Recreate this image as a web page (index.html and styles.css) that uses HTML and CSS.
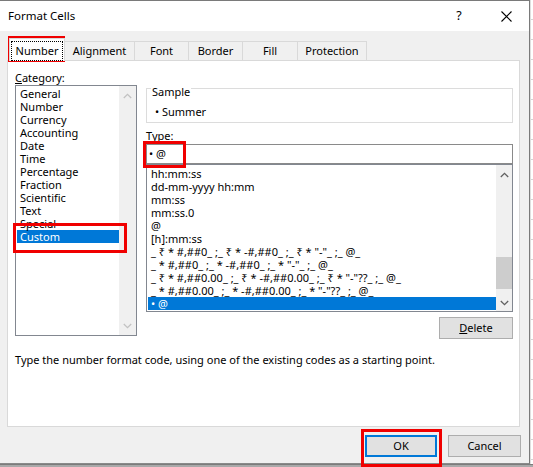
FILE: index.html
```html
<!DOCTYPE html>
<html>
<head>
<meta charset="utf-8">
<link rel="stylesheet" href="styles.css">
</head>
<body>
<div class="screen">
  <div class="desk">
    <div class="window">
      <div class="titlebar">
        <span class="title">Format Cells</span>
        <span class="help">?</span>
        <svg class="close" width="11" height="11" viewBox="0 0 11 11"><path d="M0.5 0.5 L10.5 10.5 M10.5 0.5 L0.5 10.5" stroke="#000" stroke-width="1.1" fill="none"/></svg>
      </div>
      <div class="tabs">
        <div class="tab active"><span class="focus">Number</span></div>
        <div class="tab t-align">Alignment</div>
        <div class="tab t-font">Font</div>
        <div class="tab t-border">Border</div>
        <div class="tab t-fill">Fill</div>
        <div class="tab t-prot">Protection</div>
      </div>
      <div class="panel">
        <div class="top">
          <div class="leftcol">
            <div class="label"><u>C</u>ategory:</div>
            <div class="catlist">
              <div class="items">
                <div class="item">General</div>
                <div class="item">Number</div>
                <div class="item">Currency</div>
                <div class="item">Accounting</div>
                <div class="item">Date</div>
                <div class="item">Time</div>
                <div class="item">Percentage</div>
                <div class="item">Fraction</div>
                <div class="item">Scientific</div>
                <div class="item">Text</div>
                <div class="item">Special</div>
                <div class="item selected">Custom</div>
              </div>
              <div class="vscroll disabled">
                <svg class="chev" width="9" height="6" viewBox="0 0 9 6"><polyline points="0.8,5 4.5,1.3 8.2,5" fill="none" stroke="currentColor" stroke-width="1.3"/></svg>
                <svg class="chev" width="9" height="6" viewBox="0 0 9 6"><polyline points="0.8,1 4.5,4.7 8.2,1" fill="none" stroke="currentColor" stroke-width="1.3"/></svg>
              </div>
            </div>
          </div>
          <div class="rightcol">
            <div class="group">
              <div class="legend">Sample</div>
              <div class="sample">&#8226; Summer</div>
            </div>
            <div class="typelabel">T<u>y</u>pe:</div>
            <div class="typeinput">&#8226; @</div>
            <div class="fmtlist">
              <div class="rows">
                <div class="row">hh:mm:ss</div>
                <div class="row">dd-mm-yyyy hh:mm</div>
                <div class="row">mm:ss</div>
                <div class="row">mm:ss.0</div>
                <div class="row">@</div>
                <div class="row">[h]:mm:ss</div>
                <div class="row">_ &#8377; * #,##0_ ;_ &#8377; * -#,##0_ ;_ &#8377; * "-"_ ;_ @_ </div>
                <div class="row">_ * #,##0_ ;_ * -#,##0_ ;_ * "-"_ ;_ @_ </div>
                <div class="row">_ &#8377; * #,##0.00_ ;_ &#8377; * -#,##0.00_ ;_ &#8377; * "-"??_ ;_ @_ </div>
                <div class="row">_ * #,##0.00_ ;_ * -#,##0.00_ ;_ * "-"??_ ;_ @_ </div>
                <div class="row selected">&#8226; @</div>
              </div>
              <div class="vscroll active">
                <svg class="chev" width="9" height="6" viewBox="0 0 9 6"><polyline points="0.8,5 4.5,1.3 8.2,5" fill="none" stroke="currentColor" stroke-width="1.3"/></svg>
                <div class="track"><div class="thumb"></div></div>
                <svg class="chev" width="9" height="6" viewBox="0 0 9 6"><polyline points="0.8,1 4.5,4.7 8.2,1" fill="none" stroke="currentColor" stroke-width="1.3"/></svg>
              </div>
            </div>
            <div class="delrow"><button class="btn del"><u>D</u>elete</button></div>
          </div>
        </div>
        <div class="hint">Type the number format code, using one of the existing codes as a starting point.</div>
      </div>
      <div class="footer">
        <button class="btn ok">OK</button>
        <button class="btn cancel">Cancel</button>
      </div>
    </div>
    <div class="strip"></div>
  </div>
  <div class="below"></div>
  <div class="mark m-tab"></div>
  <div class="mark m-custom"></div>
  <div class="mark m-type"></div>
  <div class="mark m-ok"></div>
</div>
</body>
</html>
```

FILE: styles.css
```css
* { box-sizing: border-box; }
html, body { margin: 0; padding: 0; }
body {
  width: 533px;
  height: 467px;
  overflow: hidden;
  background: #ffffff;
  font-family: "Noto Sans", "Open Sans", "DejaVu Sans", sans-serif;
  font-size: 11px;
  color: #000;
}
.screen { position: relative; width: 533px; height: 467px; }
.desk { display: flex; height: 464px; }
.window {
  width: 530px;
  height: 464px;
  background: #f0f0f0;
  border-top: 1px solid #7a7a7a;
  border-right: 1px solid #7a7a7a;
  border-bottom: 1px solid #8a8a8a;
  display: flex;
  flex-direction: column;
}
.strip {
  flex: 1;
  background: repeating-linear-gradient(to bottom, #ffffff 0, #ffffff 19px, #d4d4d4 19px, #d4d4d4 20px);
  border-left: 1px solid #e0e0e0;
}
.below { height: 3px; background: #a9a9a9; border-top: 1px solid #7c7c7c; }

.titlebar {
  height: 30px;
  background: #fff;
  display: flex;
  align-items: center;
  padding-left: 8px;
  flex: none;
}
.title { font-size: 11.5px; line-height: 14px; }
.help { margin-left: auto; font-size: 12.5px; line-height: 14px; width: 10px; text-align: center; margin-right: 37px; }
.close { margin-right: 17px; display: block; }

.tabs {
  display: flex;
  align-items: flex-end;
  height: 23px;
  margin-top: 7px;
  margin-bottom: -1px;
  padding-left: 9px;
  position: relative;
  z-index: 2;
  flex: none;
}
.tab {
  height: 19px;
  margin-bottom: 1px;
  border: 1px solid #d9d9d9;
  border-bottom: none;
  background: #f0f0f0;
  text-align: center;
  line-height: 17px;
  margin-left: -1px;
}
.tab.active {
  height: 23px;
  margin-bottom: 0;
  margin-left: 0;
  width: 56px;
  background: #fff;
  padding-top: 2px;
  position: relative;
  z-index: 3;
}
.tab .focus {
  display: block;
  margin: 0 1px;
  height: 20px;
  border: 1px dotted #000;
  line-height: 18px;
}
.t-align { width: 71px; }
.t-font { width: 55px; }
.t-border { width: 55px; }
.t-fill { width: 56px; }
.t-prot { width: 70px; }

.panel {
  margin-left: 7px;
  width: 513px;
  height: 367px;
  background: #fff;
  border: 1px solid #d9d9d9;
  flex: none;
}
.top { display: flex; padding: 9px 0 0 7px; }
.leftcol { width: 122px; }
.label { line-height: 15px; height: 15px; }
.catlist {
  height: 251px;
  border: 1px solid #828790;
  display: flex;
}
.items { flex: 1; padding: 1px 0 0 1px; }
.item { line-height: 13px; height: 13px; padding-left: 3px; }
.item.selected { background: #0078d7; color: #fff; }

.vscroll {
  width: 17px;
  background: #f0f0f0;
  display: flex;
  flex-direction: column;
  align-items: center;
  justify-content: space-between;
  padding: 7px 0 6px;
}
.vscroll.disabled { color: #c2c2c2; }
.vscroll.active { color: #606060; width: 16px; padding: 7px 0 5px; }
.chev { display: block; flex: none; }
.track { flex: 1; width: 100%; padding-top: 79px; }
.thumb { height: 32px; background: #cdcdcd; }

.rightcol { width: 367px; margin-left: 9px; }
.group {
  margin-top: 18px;
  height: 35px;
  border: 1px solid #dcdcdc;
}
.legend {
  width: fit-content;
  margin: -4px 0 0 4px;
  padding: 0 1px;
  background: #fff;
  line-height: 14px;
}
.sample { margin-top: 6px; padding-left: 8px; line-height: 14px; }
.typelabel { margin-top: 6px; line-height: 14px; }
.typeinput {
  margin-top: 1px;
  height: 20px;
  border: 1px solid #8a8a8a;
  line-height: 18px;
  padding-left: 2px;
}
.fmtlist {
  height: 148px;
  border: 1px solid #828790;
  display: flex;
}
.rows {
  flex: 1;
  display: flex;
  flex-direction: column;
  justify-content: flex-end;
  overflow: hidden;
  padding: 1px 0 1px 1px;
}
.row { flex: none; height: 13px; line-height: 13px; padding-left: 3px; white-space: pre; }
.row.selected { background: #0078d7; color: #fff; }
.delrow { display: flex; justify-content: flex-end; margin-top: 5px; }

.btn {
  font-family: inherit;
  font-size: 11px;
  color: #000;
  background: #e1e1e1;
  border: 1px solid #adadad;
  height: 22px;
  padding: 0;
  margin: 0;
  line-height: 18px;
}
.del { width: 74px; }
.hint { margin-top: 14px; padding-left: 7px; line-height: 14px; }

.footer {
  display: flex;
  justify-content: flex-end;
  gap: 11px;
  padding-right: 8px;
  margin-top: 8px;
}
.ok { width: 72px; border: 2px solid #0078d7; }
.cancel { width: 73px; }

.mark { position: absolute; border: 3px solid #f00000; }
.m-tab { left: 8px; top: 36px; width: 57px; height: 26px; }
.m-custom { left: 13px; top: 223px; width: 114px; height: 30px; }
.m-type { left: 143px; top: 141px; width: 43px; height: 27px; }
.m-ok { left: 361px; top: 429px; width: 81px; height: 38px; }
```
